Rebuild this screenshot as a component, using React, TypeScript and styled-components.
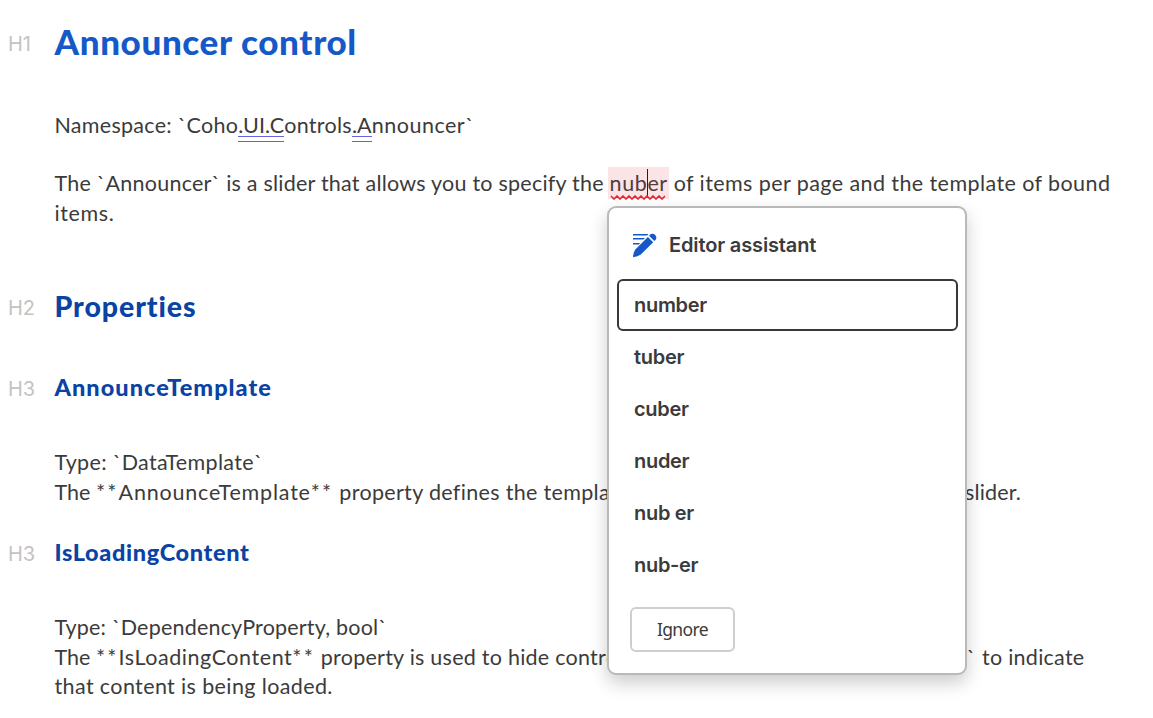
import React from "react";
import styled, { createGlobalStyle } from "styled-components";

const GlobalStyle = createGlobalStyle`
  * { box-sizing: border-box; }
  body {
    margin: 0;
    background: #fff;
    color: #3b3b3b;
    font-family: Lato, "Liberation Sans", sans-serif;
    overflow: hidden;
  }
`;

const Page = styled.main`
  position: relative;
  height: 718px;
  padding-top: 20px;
  overflow: hidden;
`;

const Section = styled.section<{ $gap: number }>`
  display: grid;
  grid-template-columns: 55px 1fr;
  margin-bottom: ${(p) => p.$gap}px;
`;

const Level = styled.span<{ $drop?: number }>`
  height: 25px;
  margin-top: ${(p) => p.$drop ?? 3}px;
  padding-left: 8px;
  font: 400 20px/25px Inter, sans-serif;
  letter-spacing: -0.2px;
  color: #c3c3c3;
`;

const Title = styled.h1<{ $size: number; $line: number; $track: number; $color: string }>`
  height: ${(p) => p.$line}px;
  margin: 0 0 0 -0.5px;
  font-size: ${(p) => p.$size}px;
  line-height: ${(p) => p.$line}px;
  letter-spacing: ${(p) => p.$track}px;
  color: ${(p) => p.$color};
  font-weight: 900;
`;

const Paragraph = styled.p<{ $gap: number }>`
  margin: 0 0 ${(p) => p.$gap}px 54.5px;
  font-size: 21.5px;
  line-height: 29.5px;
  white-space: pre;
`;

const Line = styled.span`
  display: block;
  height: 29.5px;
`;

const Run = styled.span<{ $track: number }>`
  letter-spacing: ${(p) => p.$track}px;
`;

const Flagged = styled(Run)`
  position: relative;

  &::after {
    content: "";
    position: absolute;
    left: 0;
    right: 0;
    top: 24px;
    height: 4px;
    border: solid #6663e2;
    border-width: 1px 0;
  }
`;

const Misspelled = styled(Run)`
  position: relative;
  display: inline-block;
  color: #523c3e;

  &::before {
    content: "";
    position: absolute;
    z-index: -1;
    left: -2px;
    right: -1px;
    top: -2px;
    height: 32px;
    background: #fbe4e5;
  }
`;

const Caret = styled.span`
  position: absolute;
  left: 37px;
  top: 0;
  width: 1px;
  height: 28px;
  background: #222;
`;

const Squiggle = styled.svg`
  position: absolute;
  left: 0;
  top: 26px;
`;

const Canvas = styled.div`
  position: relative;
  z-index: 0;
`;

const Popup = styled.aside`
  position: absolute;
  z-index: 2;
  left: 607px;
  top: 206px;
  width: 360px;
  height: 469px;
  padding: 24px 7px 0 8px;
  border: 2px solid #b9b9b9;
  border-radius: 9px;
  background: #fff;
  box-shadow: 0 8px 18px rgba(0, 0, 0, 0.2);
`;

const PopupHeader = styled.header`
  display: flex;
  align-items: center;
  gap: 11px;
  height: 26px;
  padding-left: 16px;
  margin-bottom: 21px;
  font: 600 20px/26px Inter, sans-serif;
  letter-spacing: -0.14px;
`;

const Options = styled.div`
  display: flex;
  flex-direction: column;
`;

const Option = styled.button<{ $active?: boolean }>`
  height: 52px;
  padding: 0 0 0 15px;
  border: 2px solid ${(p) => (p.$active ? "#383838" : "transparent")};
  border-radius: 6px;
  background: none;
  color: #3b3b3b;
  text-align: left;
  font: 600 20px/26px Inter, sans-serif;
  letter-spacing: -0.3px;
`;

const Ignore = styled.button`
  width: 105px;
  height: 45px;
  margin: 16px 0 0 13px;
  padding: 0 0 2px;
  border: 2px solid #cecece;
  border-radius: 6px;
  background: #fff;
  color: #3b3b3b;
  font: 400 17.5px/24px "Noto Sans", sans-serif;
  letter-spacing: -0.6px;
`;

const EditorIcon = () => (
  <svg width="25" height="25" viewBox="0 0 25 25" fill="#1559c9">
    <path d="M0 1h15.6l-1.4 1.5H0zM0 5h12l-1.5 1.5H0zM0 10h7.2l-1.5 1.5H0z" />
    <path d="M14.9 3.9 20.2 9.2 7.8 21.6Q5 23.6 0 24.2 0.2 19.2 2.3 16.5Z" />
    <path d="M16 2.8 17.9 1.1A4 4 0 0 1 23.1 6.3L21.3 8.1Z" />
  </svg>
);

const suggestions = ["number", "tuber", "cuber", "nuder", "nub er", "nub-er"];
const NAVY = "#0a43a3";

export default function App() {
  return (
    <Page>
      <GlobalStyle />
      <Canvas>
        <Section $gap={49}>
          <Level $drop={12}>H1</Level>
          <Title $size={35} $line={42} $track={0.62} $color="#1559c9">Announcer control</Title>
        </Section>
        <Paragraph $gap={28.5}>
          <Line>
            <Run $track={0.28}>Namespace: `Coho</Run>
            <Flagged $track={0.1}>.UI.C</Flagged>
            <Run $track={0.28}>ontrols</Run>
            <Flagged $track={0.1}>.A</Flagged>
            <Run $track={0.5}>nnouncer`</Run>
          </Line>
        </Paragraph>
        <Paragraph $gap={61}>
          <Line>
            <Run $track={0.23}>{"The `Announcer` is a slider that allows you to specify the "}</Run>
            <Misspelled $track={0.6}>
              nuber
              <Caret />
              <Squiggle width="58" height="5" viewBox="0 0 58 5" fill="none" stroke="#e8242f" strokeWidth="1.6">
                <path d="M1 1l3 3 3-3 3 3 3-3 3 3 3-3 3 3 3-3 3 3 3-3 3 3 3-3 3 3 3-3 3 3 3-3 3 3 3-3" />
              </Squiggle>
            </Misspelled>
            <Run $track={0.42}>{" of items per page and the template of bound"}</Run>
          </Line>
          <Line><Run $track={0.6}>items.</Run></Line>
        </Paragraph>
        <Section $gap={50}>
          <Level $drop={7}>H2</Level>
          <Title as="h2" $size={28.5} $line={34} $track={0.92} $color={NAVY}>Properties</Title>
        </Section>
        <Section $gap={46}>
          <Level $drop={4}>H3</Level>
          <Title as="h3" $size={23.5} $line={28} $track={1.03} $color={NAVY}>AnnounceTemplate</Title>
        </Section>
        <Paragraph $gap={31}>
          <Line><Run $track={0.34}>Type: `DataTemplate`</Run></Line>
          <Line>
            <Run $track={0}>{"The "}</Run>
            <Run $track={2.2}>**</Run>
            <Run $track={0.8}>AnnounceTemplate</Run>
            <Run $track={2.2}>**</Run>
            <Run $track={0.33}>{" property defines the templa"}</Run>
            <Run $track={0.74}>{"te that is used for items within the "}</Run>
            <Run $track={0.15}>slider.</Run>
          </Line>
        </Paragraph>
        <Section $gap={46}>
          <Level $drop={4}>H3</Level>
          <Title as="h3" $size={23.5} $line={28} $track={0.63} $color={NAVY}>IsLoadingContent</Title>
        </Section>
        <Paragraph $gap={0}>
          <Line><Run $track={0.2}>Type: `DependencyProperty, bool`</Run></Line>
          <Line>
            <Run $track={0}>{"The "}</Run>
            <Run $track={2.2}>**</Run>
            <Run $track={0.56}>IsLoadingContent</Run>
            <Run $track={2.2}>**</Run>
            <Run $track={0.25}>{" property is used to hide contr"}</Run>
            <Run $track={0.88}>ol content and display the `Loading`</Run>
            <Run $track={0.25}>{" to indicate"}</Run>
          </Line>
          <Line><Run $track={0.38}>that content is being loaded.</Run></Line>
        </Paragraph>
      </Canvas>
      <Popup>
        <PopupHeader><EditorIcon />Editor assistant</PopupHeader>
        <Options>
          {suggestions.map((word, i) => (
            <Option key={word} $active={i === 0}>{word}</Option>
          ))}
        </Options>
        <Ignore>Ignore</Ignore>
      </Popup>
    </Page>
  );
}
